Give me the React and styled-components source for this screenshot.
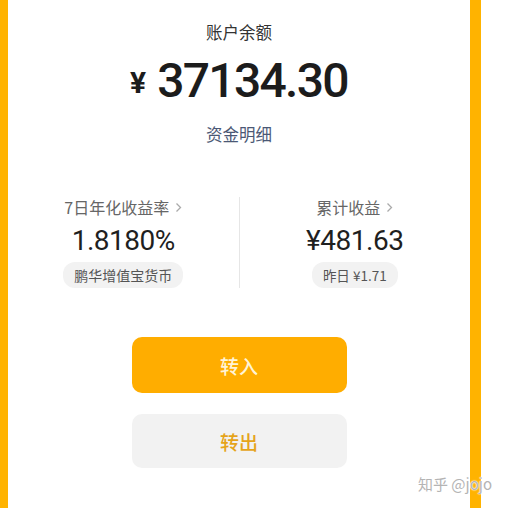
import React from "react";
import styled, { createGlobalStyle } from "styled-components";

const Global = createGlobalStyle`
  html, body { margin: 0; padding: 0; background: #fff; }
  body { font-family: "Noto Sans CJK SC", "Noto Sans", sans-serif; }
`;

const Page = styled.div`
  position: relative;
  width: 508px;
  height: 508px;
  display: flex;
  overflow: hidden;
  background: #fff;
`;

const Bar = styled.div`
  flex: 0 0 ${(p) => p.$w}px;
  background: #ffb300;
`;

const Side = styled.div`
  flex: 0 0 27px;
  background: #fff;
`;

const Main = styled.div`
  flex: 1;
  display: flex;
  flex-direction: column;
  align-items: center;
  padding-top: 22px;
`;

const Title = styled.div`
  font-size: 16.5px;
  line-height: 20px;
  color: #333;
`;

const Amount = styled.div`
  margin-top: 11px;
  display: flex;
  align-items: baseline;
  font-family: Roboto, "Noto Sans", sans-serif;
  color: #1c1c1c;
  height: 56px;
  line-height: 56px;
`;

const Yen = styled.span`
  font-size: 30px;
  font-weight: 700;
  margin-right: 11px;
  position: relative;
  top: -4px;
`;

const Digits = styled.span`
  font-size: 48px;
  font-weight: 500;
  letter-spacing: -1.7px;
`;

const Detail = styled.div`
  margin-top: 15px;
  font-size: 16.5px;
  line-height: 20px;
  color: #4b5875;
`;

const Stats = styled.div`
  align-self: stretch;
  margin-top: 53px;
  display: grid;
  grid-template-columns: 1fr 1px 1fr;
`;

const Divider = styled.div`
  background: #e6e6e6;
`;

const Stat = styled.div`
  display: flex;
  flex-direction: column;
  align-items: center;
`;

const StatLabel = styled.div`
  display: flex;
  align-items: center;
  gap: 6px;
  font-size: 16px;
  line-height: 20px;
  color: #666;
`;

const Chevron = styled.svg`
  width: 7px;
  height: 11px;
`;

const StatValue = styled.div`
  margin-top: 8px;
  font-family: Roboto, "Noto Sans", sans-serif;
  font-size: 28px;
  line-height: 32px;
  color: #1f1f1f;
  letter-spacing: -0.5px;
`;

const Tag = styled.div`
  margin-top: 5px;
  height: 26px;
  padding: 0 11px;
  border-radius: 12px;
  background: #f2f2f2;
  display: flex;
  align-items: center;
  font-size: ${(p) => p.$fs || 14}px;
  color: #555;
`;

const Buttons = styled.div`
  margin-top: 49px;
  display: flex;
  flex-direction: column;
  gap: 21px;
`;

const Button = styled.button`
  width: 215px;
  height: ${(p) => p.$h}px;
  border: none;
  border-radius: 10px;
  background: ${(p) => (p.$primary ? "#ffad00" : "#f2f2f2")};
  color: ${(p) => (p.$primary ? "#fff4d6" : "#e5a41a")};
  font-family: "Noto Sans CJK SC", sans-serif;
  font-size: 19px;
  font-weight: 500;
  display: flex;
  align-items: center;
  justify-content: center;
  padding: 0;
`;

const Watermark = styled.div`
  position: absolute;
  left: 418px;
  top: 474px;
  font-size: 15px;
  line-height: 20px;
  color: #b4b4b4;
  white-space: nowrap;
  text-shadow: 0 0 1px #fff, 0 0 1px #fff, 0 0 2px #fff;
`;

const Arrow = () => (
  <Chevron viewBox="0 0 7 11">
    <path d="M1.5 1.5 L5.5 5.5 L1.5 9.5" fill="none" stroke="#aaa" strokeWidth="1.3" />
  </Chevron>
);

export default function App() {
  return (
    <Page>
      <Global />
      <Bar $w={8} />
      <Main>
        <Title>账户余额</Title>
        <Amount>
          <Yen>¥</Yen>
          <Digits>37134.30</Digits>
        </Amount>
        <Detail>资金明细</Detail>
        <Stats>
          <Stat>
            <StatLabel>
              7日年化收益率 <Arrow />
            </StatLabel>
            <StatValue>1.8180%</StatValue>
            <Tag>鹏华增值宝货币</Tag>
          </Stat>
          <Divider />
          <Stat>
            <StatLabel>
              累计收益 <Arrow />
            </StatLabel>
            <StatValue>¥481.63</StatValue>
            <Tag $fs={13.5}>昨日 ¥1.71</Tag>
          </Stat>
        </Stats>
        <Buttons>
          <Button $primary $h={56}>转入</Button>
          <Button $h={54}>转出</Button>
        </Buttons>
      </Main>
      <Bar $w={11} />
      <Side />
      <Watermark>知乎 @jojo</Watermark>
    </Page>
  );
}
